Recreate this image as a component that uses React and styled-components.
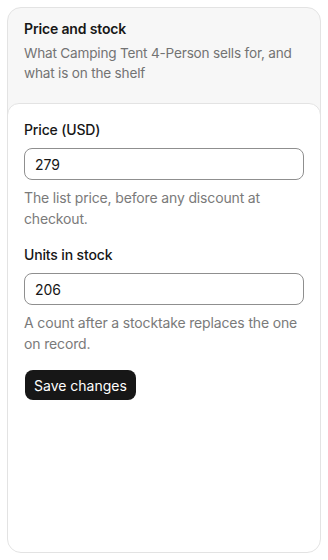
import styled, { createGlobalStyle } from "styled-components";

const GlobalStyle = createGlobalStyle`
  html, body {
    margin: 0;
    background: #ffffff;
    font-family: Inter, "Noto Sans", sans-serif;
    letter-spacing: -0.15px;
    -webkit-font-smoothing: antialiased;
  }
  * { box-sizing: border-box; }
`;

const Page = styled.div`
  padding: 7px;
`;

const Card = styled.section`
  width: 314px;
  height: 546px;
  display: flex;
  flex-direction: column;
  background: #f7f7f7;
  border: 1px solid #e3e3e3;
  border-radius: 14px;
  overflow: hidden;
`;

const Header = styled.header`
  display: flex;
  flex-direction: column;
  gap: 4px;
  padding: 11px 16px 20px;
`;

const Title = styled.h2`
  margin: 0;
  font-size: 14px;
  line-height: 20px;
  font-weight: 600;
  color: #171717;
`;

const Subtitle = styled.p`
  margin: 0;
  font-size: 13.6px;
  line-height: 20px;
  letter-spacing: -0.2px;
  color: #737373;
`;

const Panel = styled.form`
  flex: 1;
  display: flex;
  flex-direction: column;
  align-items: flex-start;
  margin: 0 -1px -1px;
  padding: 16px 16px;
  background: #ffffff;
  border: 1px solid #e3e3e3;
  border-radius: 12px 12px 14px 14px;
`;

const Field = styled.div`
  width: 100%;
  display: flex;
  flex-direction: column;
  margin-bottom: 16px;
`;

const Label = styled.label`
  font-size: 14px;
  line-height: 20px;
  font-weight: 500;
  color: #171717;
  margin-bottom: 8px;
`;

const Input = styled.input`
  width: 100%;
  height: 32px;
  padding: 0 10px;
  font: inherit;
  font-size: 14px;
  color: #171717;
  background: #ffffff;
  border: 1px solid #8f8f8f;
  border-radius: 8px;
  outline: none;
`;

const Help = styled.p`
  margin: 7px 0 0;
  font-size: 14px;
  line-height: 21px;
  color: #7a7a7a;
`;

const Button = styled.button`
  margin-left: 1px;
  height: 30px;
  padding: 0 9px;
  font: inherit;
  font-size: 14px;
  color: #ffffff;
  background: #171717;
  border: none;
  border-radius: 8px;
  cursor: pointer;
`;

export default function App() {
  return (
    <Page>
      <GlobalStyle />
      <Card>
        <Header>
          <Title>Price and stock</Title>
          <Subtitle>What Camping Tent 4-Person sells for, and what is on the shelf</Subtitle>
        </Header>
        <Panel onSubmit={(e) => e.preventDefault()}>
          <Field>
            <Label htmlFor="price">Price (USD)</Label>
            <Input id="price" defaultValue="279" />
            <Help>The list price, before any discount at checkout.</Help>
          </Field>
          <Field>
            <Label htmlFor="stock">Units in stock</Label>
            <Input id="stock" defaultValue="206" />
            <Help>A count after a stocktake replaces the one on record.</Help>
          </Field>
          <Button type="submit">Save changes</Button>
        </Panel>
      </Card>
    </Page>
  );
}
